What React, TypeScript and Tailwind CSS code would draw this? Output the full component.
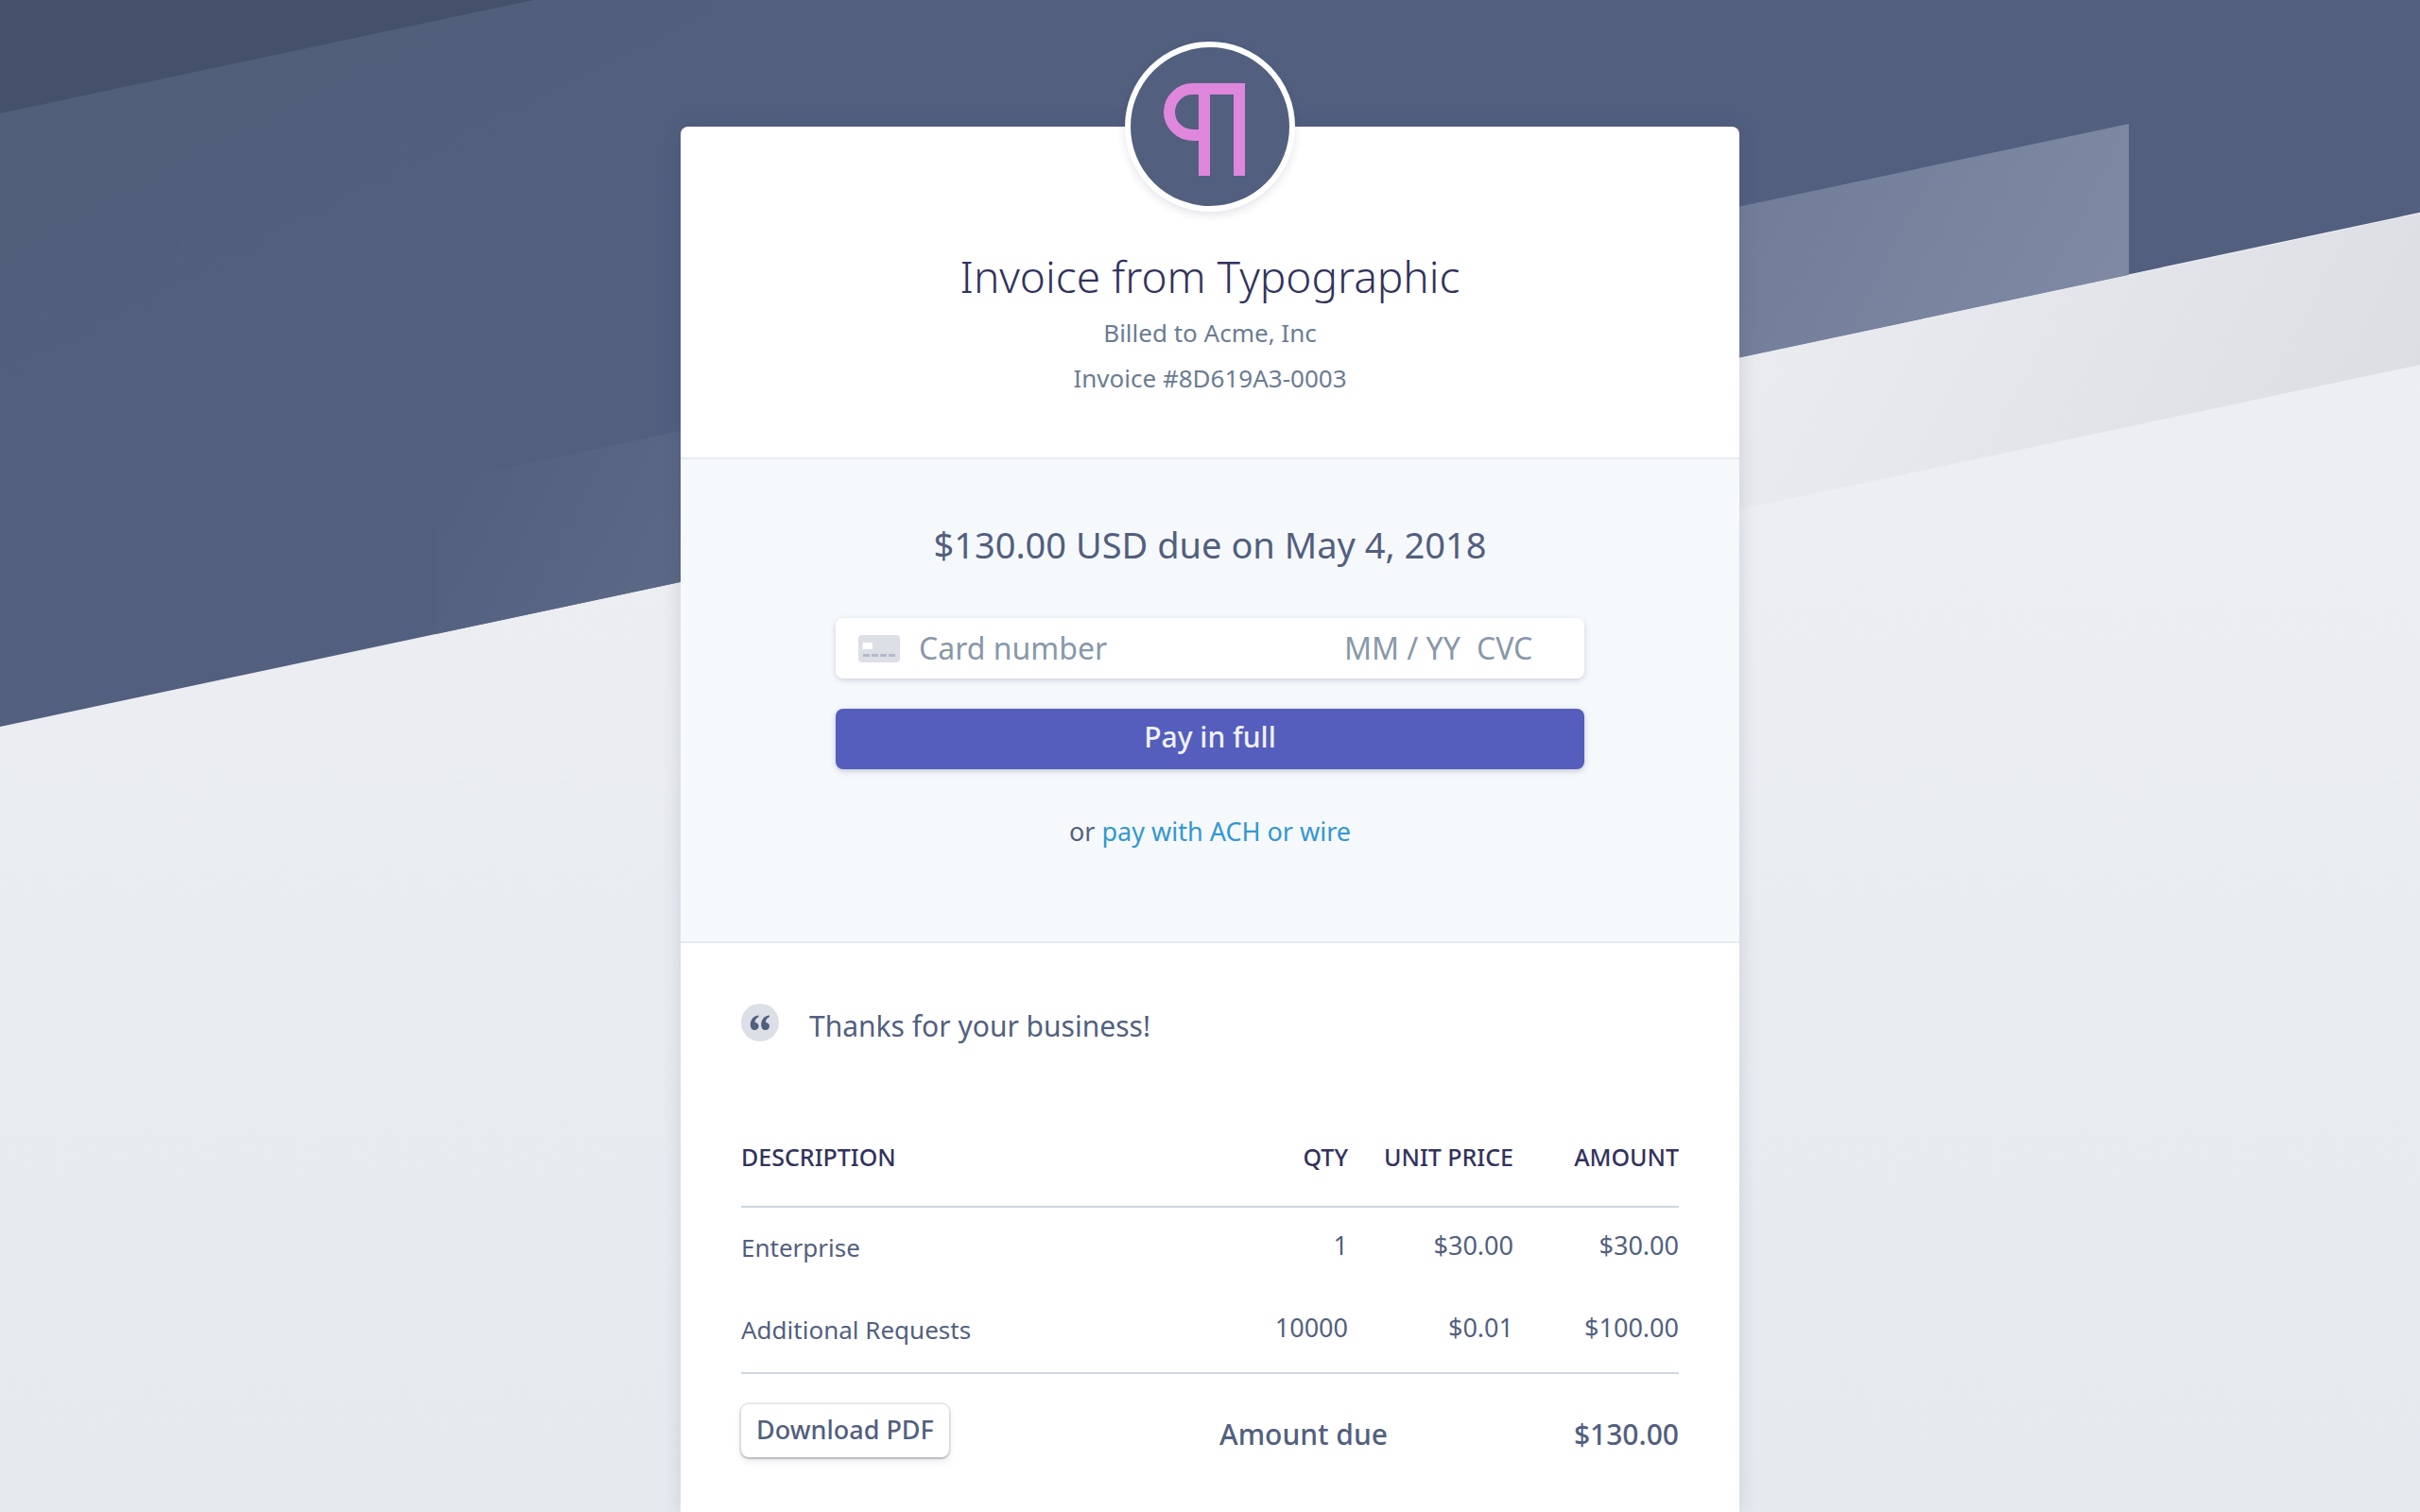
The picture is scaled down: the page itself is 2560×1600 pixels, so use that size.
import type { ReactNode } from "react";

const items = [
  { description: "Enterprise", qty: "1", price: "$30.00", amount: "$30.00" },
  { description: "Additional Requests", qty: "10000", price: "$0.01", amount: "$100.00" },
];

function Stripes() {
  return (
    <div aria-hidden="true" className="absolute inset-0 overflow-hidden">
      <div className="absolute inset-x-0 top-0 h-[769px] origin-bottom-left -skew-y-12 bg-linear-to-br from-[#525f79] to-[#525f7f] to-40%" />
      <div className="absolute inset-x-0 top-0 h-[120px] origin-bottom-left -skew-y-12 bg-[#45516b]" />
      <div className="absolute top-[511px] left-[18%] h-40 w-1/3 origin-bottom-left -skew-y-12 bg-linear-[120deg] from-[#525f7f] to-[#6c7893]" />
      <div className="absolute top-[131px] right-[12%] h-40 w-1/3 origin-top-right -skew-y-12 bg-linear-[120deg] from-[#65738f] to-[#7f89a4]" />
      <div className="absolute top-[226px] right-0 h-40 w-1/2 origin-top-right -skew-y-12 bg-linear-[120deg] from-[#f4f5f8] to-[#dcdee4]" />
    </div>
  );
}

function Logo() {
  return (
    <div className="absolute top-0 left-1/2 flex size-[180px] -translate-x-1/2 -translate-y-1/2 items-center justify-center rounded-full border-6 border-white bg-[#525f7f] shadow-[0_4px_10px_rgba(50,50,93,0.12)]">
      <svg viewBox="0 0 86 98" className="mt-1.5 mr-3 h-[98px] w-[86px]" fill="none" stroke="#de87dd" strokeWidth="12" role="img" aria-label="Typographic">
        <path d="M43 55H31C17 55 6 44 6 30.500C6 17 17 6 31 6H80V98M43 6V98" />
      </svg>
    </div>
  );
}

function CardIcon() {
  return (
    <svg viewBox="0 0 44 29" className="h-[29px] w-11 shrink-0" aria-hidden="true">
      <rect width="44" height="29" rx="4" fill="#dcdfe6" />
      <rect x="4.500" y="8" width="10.500" height="7" rx="1" fill="#fff" />
      <path d="M5 21.500h7M14 21.500h7M23 21.500h7M32 21.500h7" stroke="#b4bac8" strokeWidth="3" />
    </svg>
  );
}

function QuoteIcon() {
  return (
    <svg viewBox="0 0 40 40" className="size-10 shrink-0" aria-hidden="true">
      <circle cx="20" cy="20" r="20" fill="#dcdfe6" />
      <g fill="#525f7f">
        <path d="M18.500 12.500C13 12.800 9.800 17 9.800 22.500C9.800 26 11.700 28 14.400 28C16.800 28 18.600 26.200 18.600 24C18.600 21.700 17 20.200 14.600 20.100C14.600 17.200 16 15 18.500 14.200Z" />
        <path d="M29.900 12.500C24.400 12.800 21.200 17 21.200 22.500C21.200 26 23.100 28 25.800 28C28.200 28 30 26.200 30 24C30 21.700 28.400 20.200 26 20.100C26 17.200 27.400 15 29.900 14.200Z" />
      </g>
    </svg>
  );
}

function HeadCell({ children, className }: { children: ReactNode; className: string }) {
  return (
    <th scope="col" className={`pb-8 font-medium uppercase ${className}`}>
      {children}
    </th>
  );
}

const field =
  "min-w-0 bg-transparent text-[32px] leading-10 text-[#8898aa] outline-none placeholder:text-[#8898aa] placeholder:opacity-100";

export default function App() {
  return (
    <div className="relative flex min-h-screen justify-center bg-linear-to-b from-[#f0f0f5] via-[#e9ecf0] via-60% to-[#e6eaef] px-6 pt-[134px] font-['Noto_Sans',sans-serif] text-[#525f7f]">
      <Stripes />
      <main className="relative flex w-full max-w-[1120px] flex-col rounded-t-lg bg-white shadow-[0_0_20px_rgba(50,50,93,0.16)]">
        <Logo />
        <header className="pt-[126px] pb-15 text-center">
          <h1 className="text-[46px] leading-16 font-[330] text-[#32325d]">Invoice from Typographic</h1>
          <p className="mt-1 text-[26px] leading-12 text-[#6b7c93]">Billed to Acme, Inc</p>
          <p className="text-[26px] leading-12 text-[#6b7c93]">Invoice #8D619A3-0003</p>
        </header>

        <section className="flex flex-col items-center border-y-2 border-[#e6ebf1] bg-[#f6f9fc] px-6 pt-[62px] pb-[92px]">
          <h2 className="text-[38px] leading-14">$130.00 USD due on May 4, 2018</h2>
          <form className="mt-[50px] w-full max-w-[792px]" onSubmit={(e) => e.preventDefault()}>
            <div className="flex h-16 items-center rounded-lg bg-white pr-[52px] pl-6 shadow-[0_2px_6px_rgba(50,50,93,0.2)]">
              <CardIcon />
              <input aria-label="Card number" placeholder="Card number" className={`ml-5 flex-1 ${field}`} />
              <input aria-label="Expiry date" placeholder="MM / YY" className={`w-[140px] ${field}`} />
              <input aria-label="Security code" placeholder="CVC" className={`w-[62px] ${field}`} />
            </div>
            <button
              type="submit"
              className="mt-8 flex h-16 w-full items-center justify-center rounded-lg bg-[#555ebc] pb-1 text-[30px] leading-10 font-medium text-[#f0f1fa] shadow-[0_2px_6px_rgba(50,50,93,0.25)]"
            >
              Pay in full
            </button>
          </form>
          <p className="mt-[42px] text-[27px] leading-12">
            or{" "}
            <a href="#ach" className="text-[#3297d3]">
              pay with ACH or wire
            </a>
          </p>
        </section>

        <section className="flex flex-1 flex-col px-16 pt-16">
          <div className="flex items-start gap-8">
            <QuoteIcon />
            <p className="text-[30px] leading-12">Thanks for your business!</p>
          </div>

          <table className="mt-[94px] w-full table-fixed text-right">
            <thead>
              <tr className="border-b-2 border-[#cfd7df] text-[25px] leading-10 text-[#32325d]">
                <HeadCell className="text-left">Description</HeadCell>
                <HeadCell className="w-[120px]">Qty</HeadCell>
                <HeadCell className="w-[175px]">Unit price</HeadCell>
                <HeadCell className="w-[175px]">Amount</HeadCell>
              </tr>
            </thead>
            <tbody className="border-b-2 border-[#cfd7df] text-[27px] leading-10">
              {items.map((item) => (
                <tr key={item.description} className="h-[88px] align-middle">
                  <td className="pb-1 text-left text-[26px]">{item.description}</td>
                  <td className="pb-2">{item.qty}</td>
                  <td className="pb-2">{item.price}</td>
                  <td className="pb-2">{item.amount}</td>
                </tr>
              ))}
            </tbody>
          </table>

          <div className="mt-8 flex items-start justify-between">
            <button
              type="button"
              className="h-14 rounded-lg bg-white px-4 pb-0.5 text-[27px] leading-10 font-medium shadow-[0_0_0_2px_rgba(50,50,93,0.1),0_2px_2px_rgba(0,0,0,0.16),0_4px_8px_rgba(50,50,93,0.1)]"
            >
              Download PDF
            </button>
            <dl className="flex w-[486px] justify-between pt-2 text-[30px] leading-12 font-medium">
              <dt>Amount due</dt>
              <dd>$130.00</dd>
            </dl>
          </div>
        </section>
      </main>
    </div>
  );
}
